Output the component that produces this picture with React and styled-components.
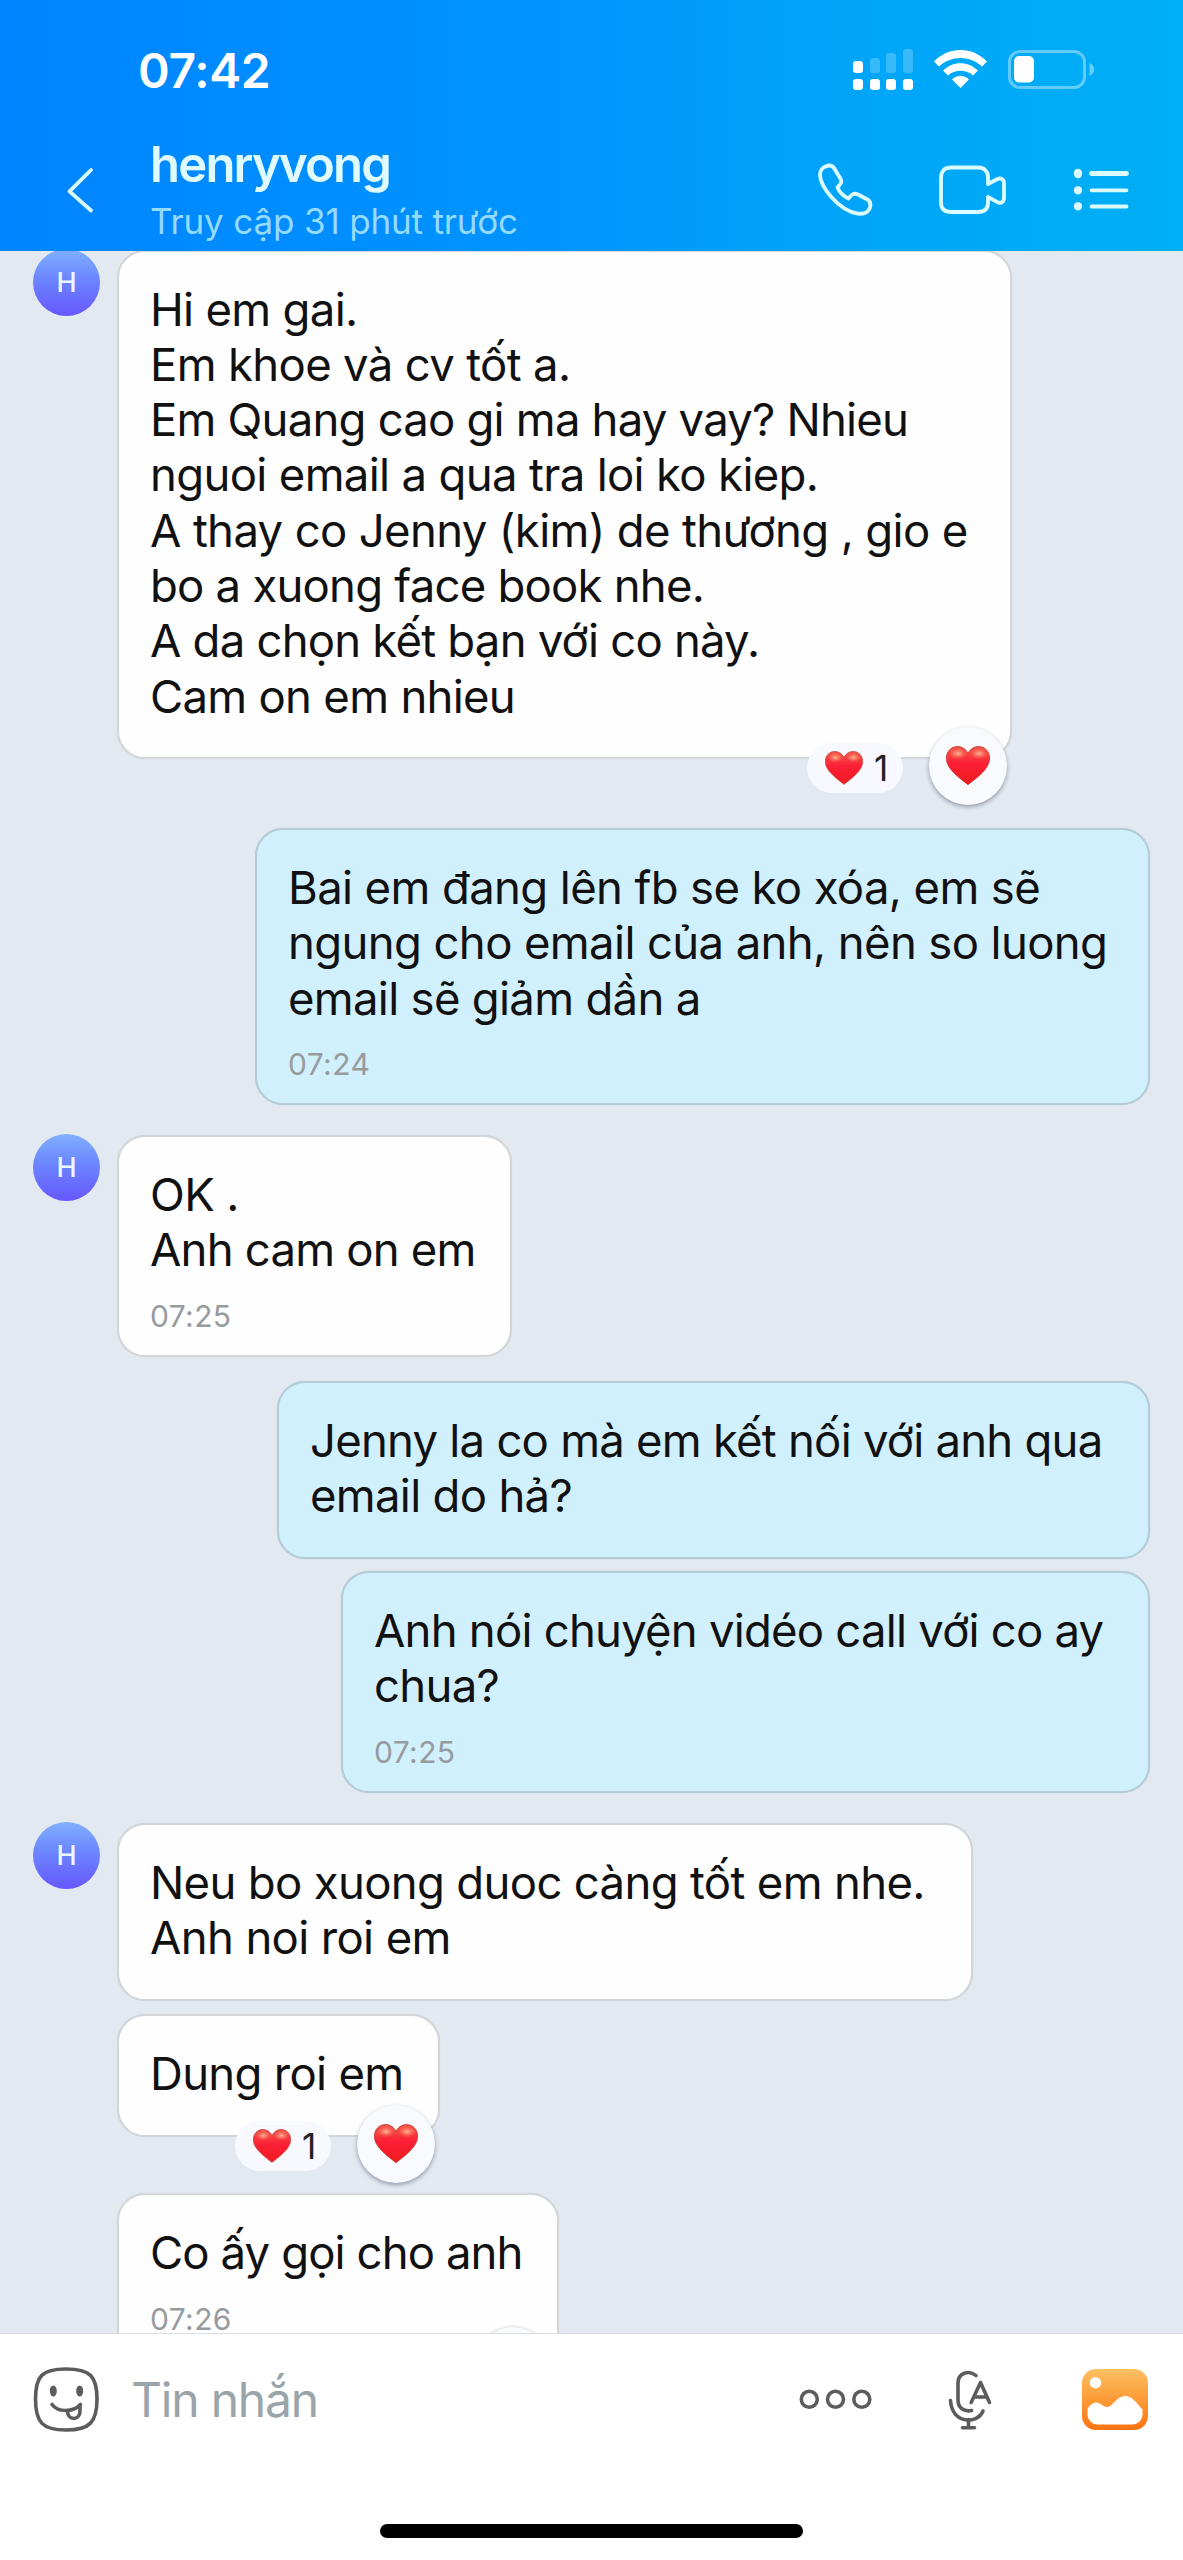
import styled, { createGlobalStyle } from 'styled-components'

// Each line is [text, letter spacing].
const conversation = [
    {
        id: 1,
        sender: 'H',
        lines: [
            ['Hi em gai.', -0.7],
            ['Em khoe và cv tốt a.', -0.67],
            ['Em Quang cao gi ma hay vay? Nhieu', -0.8],
            ['nguoi email a qua tra loi ko kiep.', -0.67],
            ['A thay co Jenny (kim) de thương , gio e', -0.65],
            ['bo a xuong face book nhe.', -0.78],
            ['A da chọn kết bạn với co này.', -0.79],
            ['Cam on em nhieu', -0.72],
        ],
        width: 895,
        gap: 68.6,
        likes: 1,
    },
    {
        id: 2,
        mine: true,
        lines: [
            ['Bai em đang lên fb se ko xóa, em sẽ', -0.63],
            ['ngung cho email của anh, nên so luong', -0.63],
            ['email sẽ giảm dần a', -0.7],
        ],
        time: '07:24',
        width: 895,
        gap: 29.6,
    },
    {
        id: 3,
        sender: 'H',
        lines: [
            ['OK .', -0.6],
            ['Anh cam on em', -0.8],
        ],
        time: '07:25',
        width: 395,
        gap: 24,
    },
    {
        id: 4,
        mine: true,
        lines: [
            ['Jenny la co mà em kết nối với anh qua', -0.77],
            ['email do hả?', -0.7],
        ],
        width: 873,
        gap: 12,
    },
    {
        id: 5,
        mine: true,
        lines: [
            ['Anh nói chuyện vidéo call với co ay', -0.78],
            ['chua?', -0.7],
        ],
        time: '07:25',
        width: 809,
        gap: 29.5,
    },
    {
        id: 6,
        sender: 'H',
        lines: [
            ['Neu bo xuong duoc càng tốt em nhe.', -0.67],
            ['Anh noi roi em', -0.65],
        ],
        width: 856,
        gap: 13.4,
    },
    {
        id: 7,
        lines: [['Dung roi em', -0.7]],
        width: 323,
        gap: 56.3,
        likes: 1,
    },
    {
        id: 8,
        lines: [['Co ấy gọi cho anh', -0.9]],
        time: '07:26',
        width: 442,
        gap: 0,
        cutOff: true,
    },
]

function App() {
    return (
        <Screen>
            <GlobalStyle />
            <Header>
                <StatusBar>
                    <Clock>07:42</Clock>
                    <StatusIcons />
                </StatusBar>
                <ContactBar>
                    <BackIcon />
                    <Contact>
                        <ContactName>henryvong</ContactName>
                        <LastSeen>Truy cập 31 phút trước</LastSeen>
                    </Contact>
                    <HeaderIcons />
                </ContactBar>
            </Header>
            <Messages>
                {conversation.map(message => (
                    <Message key={message.id} message={message} />
                ))}
            </Messages>
            <Composer>
                <ComposerRow>
                    <StickerIcon />
                    <Placeholder>Tin nhắn</Placeholder>
                    <ComposerIcons />
                </ComposerRow>
                <HomeIndicator />
            </Composer>
        </Screen>
    )
}

function Message({ message }) {
    const { sender, mine, lines, time, width, gap, likes, cutOff } = message

    return (
        <MessageRow $mine={mine} $gap={gap}>
            {!mine && <AvatarSlot>{sender && <Avatar>{sender}</Avatar>}</AvatarSlot>}
            <Bubble $mine={mine} $width={width}>
                {lines.map(([text, tracking]) => (
                    <Line key={text} $tracking={tracking}>
                        {text}
                    </Line>
                ))}
                {time && <Time>{time}</Time>}
                {likes && (
                    <Reactions>
                        <LikeCount>
                            <Heart width={38} />
                            {likes}
                        </LikeCount>
                        <LikeButton>
                            <Heart width={44} />
                        </LikeButton>
                    </Reactions>
                )}
                {/* only the top of this button shows above the composer */}
                {cutOff && <HiddenLikeButton />}
            </Bubble>
        </MessageRow>
    )
}

/* -------- Icons -------- */

function Heart({ width }) {
    return (
        <svg width={width} height={width * 0.89} viewBox='0 0 44 39'>
            <defs>
                <linearGradient id='heart-fill' x1='0' y1='0' x2='0' y2='1'>
                    <stop offset='0' stopColor='#f2584a' />
                    <stop offset='0.45' stopColor='#fb1f35' />
                    <stop offset='1' stopColor='#ee1b1f' />
                </linearGradient>
                <radialGradient id='heart-shine'>
                    <stop offset='0' stopColor='#ffc09a' stopOpacity='0.95' />
                    <stop offset='1' stopColor='#ff6a55' stopOpacity='0' />
                </radialGradient>
            </defs>
            <path
                d='M22 38.6C19.5 36.4 14 32.8 9 27.8C3.5 22.6.4 17.6.4 12.2C.4 5.3 5.2.5 11.4.5C16.2.5 20 3.2 22 7.4C24 3.2 27.8.5 32.6.5C38.8.5 43.6 5.3 43.6 12.2C43.6 17.6 40.5 22.6 35 27.8C30 32.8 24.5 36.4 22 38.6Z'
                fill='url(#heart-fill)'
                stroke='#c4352f'
                strokeWidth='0.8'
            />
            <ellipse cx='12' cy='7.5' rx='9.5' ry='6' fill='url(#heart-shine)' />
            <ellipse cx='33' cy='7.5' rx='9.5' ry='6' fill='url(#heart-shine)' />
        </svg>
    )
}

function StatusIcons() {
    return (
        <svg width='243' height='44' viewBox='852 48 243 44' fill='#fff'>
            {/* dual sim signal */}
            <rect x='853' y='61' width='10' height='12' rx='3' />
            <g opacity='0.22'>
                <rect x='870' y='58' width='10' height='15' rx='3' />
                <rect x='886' y='53' width='10' height='20' rx='3' />
                <rect x='903' y='49' width='10' height='24' rx='3' />
            </g>
            <rect x='853' y='79' width='10' height='11' rx='3' />
            <rect x='870' y='79' width='10' height='11' rx='3' />
            <rect x='886' y='79' width='10' height='11' rx='3' />
            <rect x='903' y='79' width='10' height='11' rx='3' />
            {/* wifi */}
            <path d='M934 61.5C949 46.3 972 46.3 987 61.5L982 66.5C970 55 951 55 939 66.5Z' />
            <path d='M943 70.5C953 60.7 968 60.7 978 70.5L973 75.5C966 69.3 955 69.3 948 75.5Z' />
            <path d='M952 79.5C957.5 74.6 963.5 74.6 969 79.5L960.5 88Z' />
            {/* battery */}
            <rect
                x='1009.5'
                y='51.5'
                width='75'
                height='36'
                rx='10.5'
                fill='none'
                stroke='#fff'
                strokeWidth='3'
                opacity='0.38'
            />
            <path d='M1089.5 63C1095.7 65.5 1095.7 73.5 1089.5 76Z' opacity='0.4' />
            <rect x='1014' y='56' width='20' height='26.5' rx='5' />
        </svg>
    )
}

function BackIcon() {
    return (
        <HeaderGlyph width='30' height='48' viewBox='64 166 30 48'>
            <path d='M91 170L69.5 191.3L91 210.5' />
        </HeaderGlyph>
    )
}

function HeaderIcons() {
    return (
        <HeaderGlyph width='316' height='56' viewBox='815 162 316 56'>
            {/* phone */}
            <path d='M825.5 166.6C829.5 164.5 832.5 165.5 834.5 168.7L840.5 178.8C842.5 182.5 840.5 184 837.5 187.2C839 191.5 843.5 196.3 848.5 198.5C851 195.2 853 192.6 857.5 194.2L867 199.2C870.5 201.3 871 204 870 207.5C868.5 212.5 863.5 214.3 858 213.6C838 210.5 820 186 820 174.5C820.3 170.5 822 168 825.5 166.6Z' />
            {/* video camera */}
            <path d='M951 167.5H978C984.5 167.5 988 171.5 988 177.5V184L997.5 179C1001 177.6 1004 179.3 1004 183V198C1004 201.8 1001 203.8 997.5 202.2L988 197V202.5C988 208.5 984.5 212 978 212H951C944.5 212 941 208.5 941 202.5V177.5C941 171.5 944.5 167.5 951 167.5Z' />
            {/* menu list */}
            <path d='M1091.5 173.5H1126.5' strokeWidth='4.8' />
            <path d='M1091.5 190.3H1126.5M1091.5 206.5H1126.5' />
            <g fill='#dcfbff' stroke='none'>
                <ellipse cx='1078' cy='173.5' rx='4.2' ry='4.8' />
                <circle cx='1078' cy='190.3' r='4.1' />
                <circle cx='1078' cy='206.3' r='4.1' />
            </g>
        </HeaderGlyph>
    )
}

function StickerIcon() {
    return (
        <ComposerGlyph width='66' height='66' viewBox='33 2366 66 66'>
            <path d='M66 2369C90 2369 97 2376 97 2399C97 2422 90 2430 66 2430C42 2430 35.5 2422 35.5 2399C35.5 2376 42 2369 66 2369Z' />
            <path d='M52 2404.5C58 2412.5 73 2412.5 80.5 2404.5' />
            <path d='M67.5 2411C67.5 2421 80 2421 80 2411V2406.5' />
            <ellipse cx='53.3' cy='2391' rx='3.5' ry='5.5' fill='#5c5c5c' stroke='none' />
            <ellipse cx='79.7' cy='2391' rx='3.5' ry='5.5' fill='#5c5c5c' stroke='none' />
        </ComposerGlyph>
    )
}

function ComposerIcons() {
    return (
        <ComposerGlyph width='352' height='70' viewBox='798 2364 352 70'>
            <defs>
                <linearGradient id='photo-fill' x1='0' y1='0' x2='0' y2='1'>
                    <stop offset='0' stopColor='#fdc063' />
                    <stop offset='0.5' stopColor='#fd9b38' />
                    <stop offset='1' stopColor='#fb7311' />
                </linearGradient>
            </defs>
            {/* more */}
            <circle cx='809.3' cy='2399.3' r='8' />
            <circle cx='835.5' cy='2399.3' r='8' />
            <circle cx='861.8' cy='2399.3' r='8' />
            {/* voice to text */}
            <path d='M976 2375.5C969 2369.5 958 2373 958 2383V2400C958 2408 964 2412 971.5 2410.5' />
            <path d='M950.5 2400.5C952 2425 978 2424 983 2411' />
            <path d='M968.5 2419.5V2427.5M962.5 2427.7H974.5' />
            <path d='M971.2 2402.5L980.5 2382.5L989.5 2402.5M974.5 2397H987' />
            {/* photo */}
            <rect
                x='1082'
                y='2369'
                width='66'
                height='61'
                rx='14'
                fill='url(#photo-fill)'
                stroke='none'
            />
            <g fill='#fff' stroke='none'>
                <circle cx='1095.5' cy='2382.7' r='5.7' />
                <path d='M1087.5 2410C1087.5 2407 1092.5 2402.5 1096 2402.5C1100.5 2402.5 1103 2407 1107 2407C1113 2407 1116 2396 1125.5 2396C1133 2396 1137.5 2404.5 1142.5 2409.5V2414C1142.5 2420 1138 2424.5 1132 2424.5H1098C1091.5 2424.5 1087.5 2419.5 1087.5 2414Z' />
            </g>
        </ComposerGlyph>
    )
}

/* -------- Styles -------- */

const GlobalStyle = createGlobalStyle`
    * {
        box-sizing: border-box;
    }

    body {
        margin: 0;
        font-family: Inter, 'Noto Sans', sans-serif;
    }

    svg {
        display: block;
        flex: none;
    }
`

const Screen = styled.div`
    display: flex;
    flex-direction: column;
    width: 1183px;
    height: 2560px;
    overflow: hidden;
    background: #e2e9f1;
`

const Header = styled.header`
    display: flex;
    flex-direction: column;
    flex: none;
    height: 251px;
    background: linear-gradient(90deg, #0084ff, #0094fe 45%, #00a5f9 72%, #00aff5);
    position: relative;
    z-index: 1;
`

const StatusBar = styled.div`
    display: flex;
    justify-content: space-between;
    align-items: center;
    height: 140px;
    padding: 0 88px 0 138px;
`

const Clock = styled.span`
    color: #fff;
    font-size: 48px;
    font-weight: 600;
    letter-spacing: -0.3px;
`

const ContactBar = styled.div`
    display: flex;
    align-items: center;
    height: 111px;
    padding: 0 52px 0 64px;
`

const HeaderGlyph = styled.svg`
    fill: none;
    stroke: #dcfbff;
    stroke-width: 3.8;
    stroke-linecap: round;
    stroke-linejoin: round;
    margin-bottom: 11px;
`

const Contact = styled.div`
    display: flex;
    flex-direction: column;
    flex: 1;
    height: 111px;
    margin-left: 56px;
    white-space: nowrap;
`

const ContactName = styled.span`
    height: 56px;
    line-height: 50px;
    color: #e0fbff;
    font-size: 49px;
    font-weight: 600;
    letter-spacing: -1.8px;
`

const LastSeen = styled.span`
    height: 50px;
    line-height: 50px;
    color: #95daff;
    font-size: 35px;
    letter-spacing: -0.15px;
`

const Messages = styled.main`
    display: flex;
    flex-direction: column;
    flex: none;
    height: 2083.5px;
    padding: 0 33px;
    margin-top: -1.5px;
    overflow: hidden;
`

const MessageRow = styled.div`
    display: flex;
    flex: none;
    justify-content: ${({ $mine }) => ($mine ? 'flex-end' : 'flex-start')};
    margin-bottom: ${({ $gap }) => $gap}px;
`

const AvatarSlot = styled.div`
    flex: none;
    width: 84px;
`

const Avatar = styled.div`
    display: flex;
    align-items: center;
    justify-content: center;
    width: 67px;
    height: 67px;
    margin-top: -1px;
    border-radius: 50%;
    background: linear-gradient(#7fb0ff, #6c85ff 45%, #6657ff);
    color: #eef6ff;
    font-size: 27px;
    font-weight: 500;
`

const Bubble = styled.div`
    position: relative;
    width: ${({ $width }) => $width}px;
    padding: 30px 31px 33.5px;
    border: 2px solid ${({ $mine }) => ($mine ? '#b3ccd6' : '#d3d6d8')};
    border-radius: 28px;
    background: ${({ $mine }) => ($mine ? '#d1f0fe' : '#fefefe')};
    box-shadow: 0 0 1px ${({ $mine }) => ($mine ? '#b3ccd6' : '#d3d6d8')};
`

const Line = styled.div`
    color: #111;
    font-size: 45.5px;
    line-height: 55.3px;
    letter-spacing: ${({ $tracking }) => $tracking}px;
    white-space: nowrap;
`

const Time = styled.div`
    height: 44px;
    padding-top: 20px;
    color: #979b9d;
    font-size: 30px;
    line-height: 36px;
    letter-spacing: 0.4px;
`

const Reactions = styled.div`
    display: flex;
    align-items: center;
    gap: 26px;
    position: absolute;
    right: 3px;
    bottom: -47.5px;
`

const LikeCount = styled.div`
    display: flex;
    align-items: center;
    gap: 11px;
    width: 96px;
    height: 50px;
    padding-left: 18px;
    margin-top: 5px;
    border-radius: 25px;
    background: #f7f9fe;
    color: #222;
    font-size: 35px;
`

const LikeButton = styled.div`
    display: flex;
    align-items: center;
    justify-content: center;
    width: 78px;
    height: 78px;
    border-radius: 50%;
    background: #f8fafe;
    box-shadow: 0 2px 4px rgba(50, 60, 80, 0.45);
`

const HiddenLikeButton = styled(LikeButton)`
    position: absolute;
    right: 5px;
    top: 132px;
    box-shadow: 0 0 3px rgba(50, 60, 80, 0.3);
`

const Composer = styled.footer`
    display: flex;
    flex-direction: column;
    justify-content: space-between;
    align-items: center;
    flex: 1;
    padding-bottom: 22px;
    border-top: 1px solid #dcdfe1;
    background: #fff;
    position: relative;
    z-index: 1;
`

const ComposerRow = styled.div`
    display: flex;
    align-items: center;
    width: 1183px;
    height: 130px;
    padding: 0 33px;
`

const ComposerGlyph = styled.svg`
    fill: none;
    stroke: #5c5c5c;
    stroke-width: 3.6;
    stroke-linecap: round;
    stroke-linejoin: round;
`

const Placeholder = styled.span`
    flex: 1;
    margin-left: 32px;
    color: #9aa4a9;
    font-size: 48px;
    letter-spacing: -1.2px;
    white-space: nowrap;
`

const HomeIndicator = styled.div`
    width: 423px;
    height: 14px;
    border-radius: 7px;
    background: #000;
`

export default App
